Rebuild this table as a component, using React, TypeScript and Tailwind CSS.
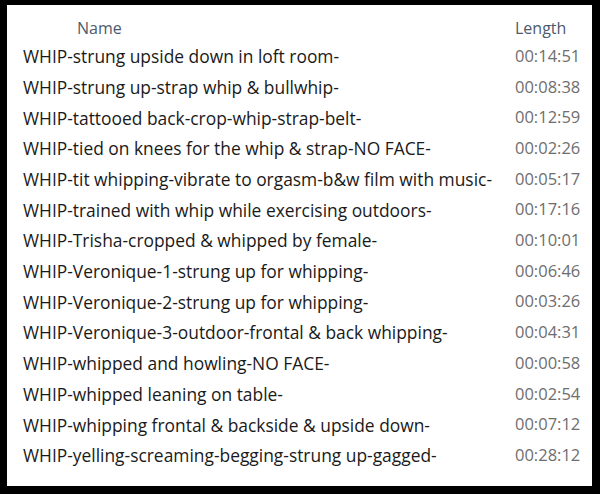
import React from 'react';

const rows: [string, string][] = [
  ['WHIP-strung upside down in loft room-', '00:14:51'],
  ['WHIP-strung up-strap whip & bullwhip-', '00:08:38'],
  ['WHIP-tattooed back-crop-whip-strap-belt-', '00:12:59'],
  ['WHIP-tied on knees for the whip & strap-NO FACE-', '00:02:26'],
  ['WHIP-tit whipping-vibrate to orgasm-b&w film with music-', '00:05:17'],
  ['WHIP-trained with whip while exercising outdoors-', '00:17:16'],
  ['WHIP-Trisha-cropped & whipped by female-', '00:10:01'],
  ['WHIP-Veronique-1-strung up for whipping-', '00:06:46'],
  ['WHIP-Veronique-2-strung up for whipping-', '00:03:26'],
  ['WHIP-Veronique-3-outdoor-frontal & back whipping-', '00:04:31'],
  ['WHIP-whipped and howling-NO FACE-', '00:00:58'],
  ['WHIP-whipped leaning on table-', '00:02:54'],
  ['WHIP-whipping frontal & backside & upside down-', '00:07:12'],
  ['WHIP-yelling-screaming-begging-strung up-gagged-', '00:28:12'],
];

const App: React.FC = () => {
  return (
    <div className="w-[600px] h-[494px] bg-black pt-[5px] pl-[7px] pr-[8px] pb-[8px]">
      <div className="h-full bg-white font-['Open_Sans',sans-serif] pl-[16px] pr-[16px]">
        {/* Column headers */}
        <div className="flex items-center h-[36px] pt-[10px] text-[16px] text-[#4c5a6e]">
          <div className="flex-1 pl-[54px]">Name</div>
          <div className="w-[61px]">Length</div>
        </div>

        {/* File rows */}
        <div className="flex flex-col">
          {rows.map(([name, length]) => (
            <div key={name} className="flex items-center h-[30.7px]">
              <div className="flex-1 text-[17.4px] text-[#1a1a1a] whitespace-nowrap">{name}</div>
              <div className="w-[61px] text-right text-[16.5px] text-[#6e6e6e]">{length}</div>
            </div>
          ))}
        </div>
      </div>
    </div>
  );
};

export default App;
